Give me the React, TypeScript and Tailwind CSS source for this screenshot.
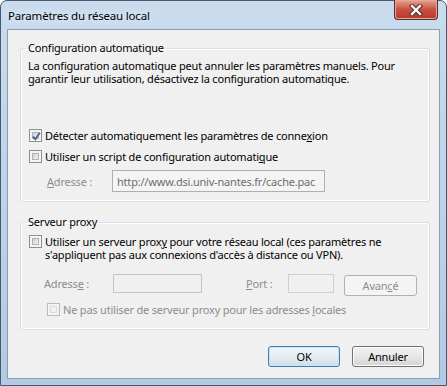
function Check({ checked = false, disabled = false }: { checked?: boolean; disabled?: boolean }) {
  return (
    <span
      className={`relative flex w-[13px] h-[13px] shrink-0 border p-[2px] ${
        disabled ? "border-[#bcbcbc] bg-[#f4f4f4]" : "border-[#8e8f8f] bg-[#f4f4f4]"
      }`}
    >
      <span
        className={`flex-1 border ${
          disabled
            ? "border-[#dcdcdc] bg-[#f0f0f0]"
            : "border-[#aeb3b9] bg-gradient-to-br from-[#cbcfd5] to-[#f6f6f6]"
        }`}
      />
      {checked && (
        <svg className="absolute left-[1px] top-[1px]" width="11" height="11" viewBox="0 0 11 11">
          <path d="M2 5.5 L4.3 8.2 L8.8 1.8" fill="none" stroke="#4a5f8e" strokeWidth="1.9" />
        </svg>
      )}
    </span>
  );
}

function Button({ label, primary = false, disabled = false, w }: { label: React.ReactNode; primary?: boolean; disabled?: boolean; w: string }) {
  return (
    <div
      className={`${w} h-[21px] rounded-[3px] border flex items-center justify-center ${
        disabled
          ? "border-[#adb2b5] bg-[#f4f4f4] text-[#8d8d8d]"
          : primary
          ? "border-[#3c7fb1] bg-gradient-to-b from-[#f0f5f9] via-[#e5edf3] to-[#d0dde7] shadow-[inset_0_0_0_1px_#c4e5f6]"
          : "border-[#707070] bg-gradient-to-b from-[#f2f2f2] via-[#e8e8e8] to-[#d4d4d4] shadow-[inset_0_0_0_1px_#fcfcfc]"
      }`}
    >
      {label}
    </div>
  );
}

export default function App() {
  return (
    <div className="w-[447px] h-[386px] overflow-hidden bg-white font-['Noto_Sans',sans-serif] text-[11px] leading-[13px] tracking-[-0.2px] text-black">
      <div className="flex flex-col w-full h-full rounded-t-[7px] border border-[#4a5868] bg-gradient-to-b from-[#cadcee] via-[#bdd3ea] to-[#b2cae4] px-[6px] pb-[6px]">
        {/* title bar */}
        <div className="h-[28px] flex items-start justify-between shrink-0">
          <div className="pl-[1px] pt-[8px] text-[11.5px] leading-[14px] text-black [text-shadow:0_0_6px_#ffffff]">
            Paramètres du réseau local
          </div>
          <div className="-mt-[1px] mr-[2px] w-[44px] h-[20px] rounded-b-[4px] border border-[#5e2b26] border-t-0 bg-gradient-to-b from-[#e5a190] via-[#c85142] to-[#b6392a] flex items-center justify-center shadow-[inset_0_0_0_1px_#e6a79b]">
            <svg width="14" height="12" viewBox="0 0 14 12">
              <path d="M3 2 L11 10 M11 2 L3 10" stroke="#4a2a2a" strokeWidth="4.4" strokeLinecap="square" />
              <path d="M3 2 L11 10 M11 2 L3 10" stroke="#ffffff" strokeWidth="2.4" strokeLinecap="square" />
            </svg>
          </div>
        </div>

        {/* client */}
        <div className="flex-1 flex flex-col border border-[#8a9db3] bg-[#f0f0f0] pl-[12px] pr-[9px]">
          <fieldset className="mt-[11px] rounded-[3px] border border-[#d5dfe5] shadow-[inset_0_0_0_1px_#ffffff] px-[7px] pb-[9px]">
            <legend className="-ml-[2px] px-[2px] leading-[14px]">Configuration automatique</legend>
            <p className="mt-[4px] leading-[13px]">
              La configuration automatique peut annuler les paramètres manuels. Pour
              <br />
              garantir leur utilisation, désactivez la configuration automatique.
            </p>
            <label className="mt-[42px] ml-[1px] flex items-center gap-[3px] h-[16px]">
              <Check checked />
              <span>
                Détecter automatiquement les paramètres de conne<span className="underline">x</span>ion
              </span>
            </label>
            <label className="mt-[5px] ml-[1px] flex items-center gap-[3px] h-[16px]">
              <Check />
              <span>
                Utiliser un script de configuration automati<span className="underline">q</span>ue
              </span>
            </label>
            <div className="mt-[6px] flex items-center">
              <span className="ml-[19px] w-[65px] text-[#8d8d8d]">
                <span className="underline">A</span>dresse :
              </span>
              <div className="w-[213px] h-[22px] border border-[#afafaf] bg-[#f4f4f4] px-[4px] flex items-center whitespace-nowrap overflow-hidden text-[#6d6d6d]">
                http://www.dsi.univ-nantes.fr/cache.pac
              </div>
            </div>
          </fieldset>

          <fieldset className="mt-[13px] rounded-[3px] border border-[#d5dfe5] shadow-[inset_0_0_0_1px_#ffffff] px-[7px] pb-[12px]">
            <legend className="-ml-[2px] px-[2px] leading-[14px]">Serveur proxy</legend>
            <label className="mt-[6px] ml-[1px] flex items-start gap-[3px]">
              <Check />
              <span className="leading-[13px]">
                Utiliser un serveur prox<span className="underline">y</span> pour votre réseau local (ces paramètres ne
                <br />
                s'appliquent pas aux connexions d'accès à distance ou VPN).
              </span>
            </label>
            <div className="mt-[13px] flex items-start text-[#8d8d8d]">
              <span className="ml-[16px] w-[69px] h-[19px] flex items-center">
                Adress<span className="underline">e</span>&nbsp;:
              </span>
              <div className="w-[89px] h-[19px] border border-[#c4c4c4] bg-[#f0f0f0]" />
              <span className="ml-[44px] w-[42px] h-[19px] flex items-center">
                <span className="underline">P</span>ort :
              </span>
              <div className="w-[46px] h-[19px] border border-[#d0d0d0] bg-[#f0f0f0]" />
              <div className="ml-[10px] mt-[1px]">
                <Button
                  w="w-[73px]"
                  disabled
                  label={
                    <span>
                      Avan<span className="underline">c</span>é
                    </span>
                  }
                />
              </div>
            </div>
            <label className="mt-[5px] ml-[19px] flex items-center gap-[3px] h-[16px] text-[#8d8d8d]">
              <Check disabled />
              <span>
                Ne pas utiliser de serveur proxy pour les adresses <span className="underline">l</span>ocales
              </span>
            </label>
          </fieldset>

          <div className="mt-[16px] mr-[6px] flex justify-end gap-[12px]">
            <Button w="w-[72px]" primary label="OK" />
            <Button w="w-[72px]" label="Annuler" />
          </div>
        </div>
      </div>
    </div>
  );
}
